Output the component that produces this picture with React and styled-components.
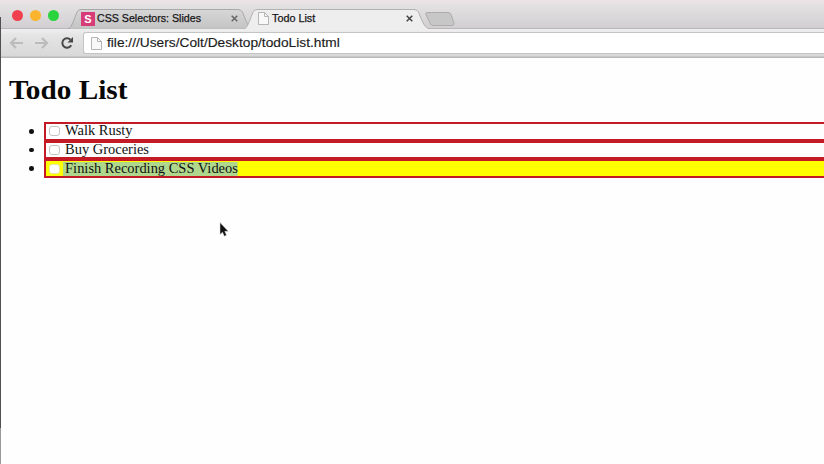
import React from 'react';
import styled, { createGlobalStyle } from 'styled-components';

const GlobalStyle = createGlobalStyle`
  * { box-sizing: border-box; }
  html, body { margin: 0; padding: 0; overflow: hidden; }
  body { background: #fefefe; }
`;

const Window = styled.div`
  position: relative;
  display: flex;
  flex-direction: column;
  width: 824px;
  height: 464px;
  background: #fefefe;
  color: #111;
  overflow: hidden;
`;

const DesktopEdge = styled.div`
  position: absolute;
  left: 0;
  top: 17px;
  bottom: 0;
  width: 1px;
  background: linear-gradient(#505052 0 411px, #99999b 411px);
`;

const TabStrip = styled.header`
  display: flex;
  flex: none;
  height: 29px;
  background: linear-gradient(#ede3e7 0, #e4e1e3 5px, #d1cfd1 28px, #b9b7b9 28px);
`;

const WindowControls = styled.div`
  display: flex;
  gap: 7px;
  padding: 9.5px 0 0 11.5px;
  width: 68px;
`;

const Light = styled.span`
  width: 11px;
  height: 11px;
  border-radius: 50%;
  background: ${(p) => p.$color};
`;

const TabBox = styled.div`
  position: relative;
  display: flex;
  align-items: center;
  flex: none;
  width: ${(p) => p.$width}px;
  height: 29px;
  padding: 8px 0 0 ${(p) => p.$pad}px;
  margin-left: ${(p) => p.$shift || 0}px;
`;

const TabShape = styled.svg`
  position: absolute;
  left: 0;
  top: 0;
`;

const Favicon = styled.span`
  position: relative;
  display: flex;
  align-items: center;
  justify-content: center;
  width: 14px;
  height: 14px;
  flex: none;
  background: #d83c78;
  color: #fff;
  font: bold 11px 'Liberation Sans', sans-serif;
`;

const PageIconSvg = styled.svg`
  position: relative;
  flex: none;
`;

const TabTitle = styled.span`
  position: relative;
  top: 0.5px;
  flex: 1;
  margin-left: ${(p) => p.$gap}px;
  font: 10px/16px 'Liberation Sans', sans-serif;
  color: #181818;
  -webkit-text-stroke: 0.25px #181818;
  white-space: nowrap;
  transform: scaleX(${(p) => p.$stretch});
  transform-origin: left;
`;

const CloseIcon = styled.svg`
  position: relative;
  flex: none;
  margin-right: ${(p) => p.$right}px;
`;

const NewTab = styled.svg`
  flex: none;
  margin-left: -6px;
`;

const Toolbar = styled.nav`
  display: flex;
  flex: none;
  height: 29px;
  background: linear-gradient(#f0eff0 0, #e6e5e6 6px, #d8d8d8 27px, #b8b8b8 28px);
`;

const NavButtons = styled.div`
  display: flex;
  gap: 10px;
  width: 83px;
  padding: 7px 0 0 9px;
`;

const AddressBar = styled.div`
  display: flex;
  align-items: center;
  flex: 1;
  height: 22px;
  margin-top: 3px;
  padding-left: 7px;
  background: #fff;
  border: 1px solid #c4c4c4;
  border-right: 0;
  border-radius: 3px 0 0 3px;
`;

const Url = styled.span`
  margin-left: 5px;
  font: 12px/16px 'Liberation Sans', sans-serif;
  color: #1c1c1c;
  -webkit-text-stroke: 0.15px #1c1c1c;
  white-space: nowrap;
  transform: scaleX(1.144);
  transform-origin: left;
`;

const Page = styled.main`
  font-family: 'Liberation Serif', serif;
  padding: 15px 0 0 9px;
`;

const Heading = styled.h1`
  width: max-content;
  margin: 0;
  font-size: 28px;
  line-height: 34px;
  color: #080808;
  transform: scaleX(1.045);
  transform-origin: left;
`;

const List = styled.ul`
  margin: 15px 0 0;
  padding: 0;
  list-style: none;
`;

const Item = styled.li`
  display: flex;
  align-items: center;
  height: 18.7px;
`;

const Bullet = styled.span`
  width: 4.6px;
  height: 4.6px;
  margin: 0 10.4px 0 20px;
  border-radius: 50%;
  background: #111;
`;

const ItemBox = styled.div`
  display: flex;
  align-items: center;
  flex: 1;
  height: 18.7px;
  padding-left: 3px;
  background: ${(p) => (p.$highlighted ? '#ffff00' : '#fefefe')};
  border: 2px solid #c41a26;
  border-right: 0;
`;

const Checkbox = styled.span`
  width: 11px;
  height: 10px;
  border: 1px solid ${(p) => (p.$highlighted ? '#e6e6a0' : '#c4c4c4')};
  border-radius: 3px;
  background: #fff;
`;

const Label = styled.span`
  margin-left: 3px;
  padding-left: 2px;
  font-size: 14px;
  line-height: 14px;
  white-space: nowrap;
  background: ${(p) => (p.$selected ? '#afd88c' : 'transparent')};
  transform: scaleX(1.033);
  transform-origin: left;
`;

const Pointer = styled.svg`
  position: absolute;
  left: 219px;
  top: 222px;
`;

const todos = [
  { text: 'Walk Rusty' },
  { text: 'Buy Groceries' },
  { text: 'Finish Recording CSS Videos', selected: true },
];

function PageIcon() {
  return (
    <PageIconSvg width="11" height="13" viewBox="0 0 11 13">
      <path d="M.5 .5H6.5L10.5 4.5V12.5H.5Z" fill="#f8f8f8" stroke="#b5b5b5" />
      <path d="M6.5 .5V4.5H10.5" fill="none" stroke="#b5b5b5" />
    </PageIconSvg>
  );
}

function Close({ right, color }) {
  return (
    <CloseIcon $right={right} width="7" height="7" viewBox="0 0 7 7">
      <path d="M.7 .7L6.3 6.3M6.3 .7L.7 6.3" stroke={color} strokeWidth="1.5" />
    </CloseIcon>
  );
}

function Arrow({ flip }) {
  return (
    <svg width="15" height="14" viewBox="0 0 15 14">
      <path
        d="M7 2L2 7L7 12M2.5 7H14"
        transform={flip ? 'translate(15 0) scale(-1 1)' : undefined}
        fill="none"
        stroke="#bcbcbc"
        strokeWidth="2.2"
      />
    </svg>
  );
}

export default function App() {
  return (
    <Window>
      <GlobalStyle />
      <TabStrip>
        <WindowControls>
          <Light $color="#f0404f" />
          <Light $color="#fbb42e" />
          <Light $color="#2bd43f" />
        </WindowControls>
        <TabBox $width={184} $pad={13}>
          <TabShape width="184" height="29">
            <defs>
              <linearGradient id="idle" x1="0" y1="0" x2="0" y2="1">
                <stop offset="0" stopColor="#d8d7d8" />
                <stop offset="1" stopColor="#c5c4c5" />
              </linearGradient>
            </defs>
            <path d="M0 28.5C3 28 4 25 9 12Q10 9.500 13 9.500H170Q173 9.500 174.500 12C179 24 181 28 184 28.500" fill="url(#idle)" stroke="#aaa9aa" />
          </TabShape>
          <Favicon>S</Favicon>
          <TabTitle $gap={2} $stretch={1.063}>CSS Selectors: Slides</TabTitle>
          <Close right={14} color="#666" />
        </TabBox>
        <TabBox $width={186} $pad={14} $shift={-8}>
          <TabShape width="186" height="29">
            <path d="M0 29C3 28 4 25 9 12Q10 9.500 13 9.500H170Q173 9.500 174.500 12C179 24 181 28 186 29" fill="#efeeef" stroke="#b3b2b3" />
          </TabShape>
          <PageIcon />
          <TabTitle $gap={3} $stretch={1.08}>Todo List</TabTitle>
          <Close right={17} color="#444" />
        </TabBox>
        <NewTab width="32" height="29">
          <path d="M3.500 12.500H24Q26 12.500 27 14.500L30 23Q30.500 25.500 28 25.500H9Q7 25.500 6 23L2 14.500Q1 12.500 3.500 12.500Z" fill="#c8c7c8" stroke="#adacad" />
        </NewTab>
      </TabStrip>
      <Toolbar>
        <NavButtons>
          <Arrow />
          <Arrow flip />
          <svg width="16" height="14" viewBox="0 0 14 14">
            <path d="M11.200 9.200A4.700 4.700 0 1 1 10.500 3.800" fill="none" stroke="#484848" strokeWidth="2" />
            <path d="M13 1V6.500H7.500Z" fill="#484848" />
          </svg>
        </NavButtons>
        <AddressBar>
          <PageIcon />
          <Url>file:///Users/Colt/Desktop/todoList.html</Url>
        </AddressBar>
      </Toolbar>
      <Page>
        <Heading>Todo List</Heading>
        <List>
          {todos.map((todo) => (
            <Item key={todo.text}>
              <Bullet />
              <ItemBox $highlighted={todo.selected}>
                <Checkbox $highlighted={todo.selected} />
                <Label $selected={todo.selected}>{todo.text}</Label>
              </ItemBox>
            </Item>
          ))}
        </List>
      </Page>
      <Pointer width="10" height="15" viewBox="0 0 10 15">
        <path d="M1 .5V12.5L3.500 10.200L5.300 14.200L7.500 13.200L5.800 9.300H9.300Z" fill="#111" stroke="#ddd" strokeWidth=".5" />
      </Pointer>
      <DesktopEdge />
    </Window>
  );
}
